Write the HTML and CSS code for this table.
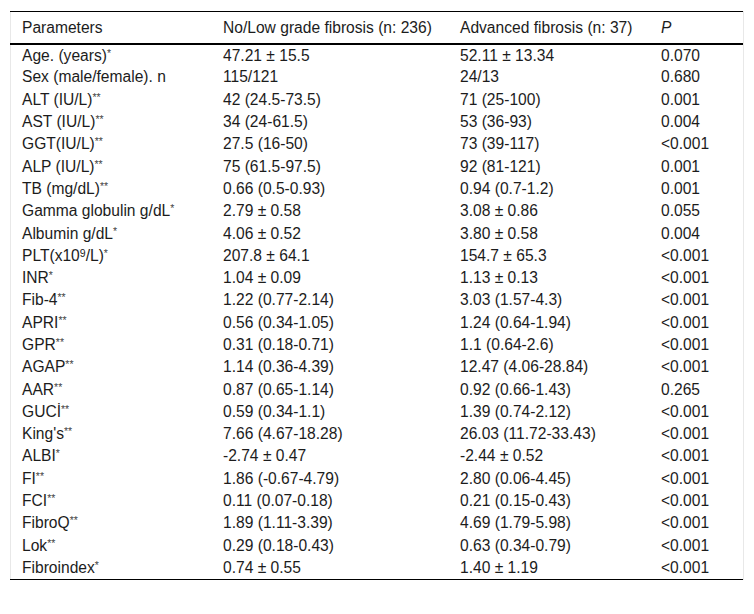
FILE: index.html
```html
<!DOCTYPE html>
<html lang="en">
<head>
<meta charset="utf-8">
<title>Table</title>
<link rel="stylesheet" href="styles.css">
</head>
<body>
<div class="frame">
<table class="data">
<thead>
<tr><th>Parameters</th><th>No/Low grade fibrosis (n: 236)</th><th>Advanced fibrosis (n: 37)</th><th><i>P</i></th></tr>
</thead>
<tbody>
<tr><td>Age. (years)<sup>*</sup></td><td>47.21 ± 15.5</td><td>52.11 ± 13.34</td><td>0.070</td></tr>
<tr><td>Sex (male/female). n</td><td>115/121</td><td>24/13</td><td>0.680</td></tr>
<tr><td>ALT (IU/L)<sup>**</sup></td><td>42 (24.5-73.5)</td><td>71 (25-100)</td><td>0.001</td></tr>
<tr><td>AST (IU/L)<sup>**</sup></td><td>34 (24-61.5)</td><td>53 (36-93)</td><td>0.004</td></tr>
<tr><td>GGT(IU/L)<sup>**</sup></td><td>27.5 (16-50)</td><td>73 (39-117)</td><td>&lt;0.001</td></tr>
<tr><td>ALP (IU/L)<sup>**</sup></td><td>75 (61.5-97.5)</td><td>92 (81-121)</td><td>0.001</td></tr>
<tr><td>TB (mg/dL)<sup>**</sup></td><td>0.66 (0.5-0.93)</td><td>0.94 (0.7-1.2)</td><td>0.001</td></tr>
<tr><td>Gamma globulin g/dL<sup>*</sup></td><td>2.79 ± 0.58</td><td>3.08 ± 0.86</td><td>0.055</td></tr>
<tr><td>Albumin g/dL<sup>*</sup></td><td>4.06 ± 0.52</td><td>3.80 ± 0.58</td><td>0.004</td></tr>
<tr><td>PLT(x10<sup class="exp">9</sup>/L)<sup>*</sup></td><td>207.8 ± 64.1</td><td>154.7 ± 65.3</td><td>&lt;0.001</td></tr>
<tr><td>INR<sup>*</sup></td><td>1.04 ± 0.09</td><td>1.13 ± 0.13</td><td>&lt;0.001</td></tr>
<tr><td>Fib-4<sup>**</sup></td><td>1.22 (0.77-2.14)</td><td>3.03 (1.57-4.3)</td><td>&lt;0.001</td></tr>
<tr><td>APRI<sup>**</sup></td><td>0.56 (0.34-1.05)</td><td>1.24 (0.64-1.94)</td><td>&lt;0.001</td></tr>
<tr><td>GPR<sup>**</sup></td><td>0.31 (0.18-0.71)</td><td>1.1 (0.64-2.6)</td><td>&lt;0.001</td></tr>
<tr><td>AGAP<sup>**</sup></td><td>1.14 (0.36-4.39)</td><td>12.47 (4.06-28.84)</td><td>&lt;0.001</td></tr>
<tr><td>AAR<sup>**</sup></td><td>0.87 (0.65-1.14)</td><td>0.92 (0.66-1.43)</td><td>0.265</td></tr>
<tr><td>GUCİ<sup>**</sup></td><td>0.59 (0.34-1.1)</td><td>1.39 (0.74-2.12)</td><td>&lt;0.001</td></tr>
<tr><td>King's<sup>**</sup></td><td>7.66 (4.67-18.28)</td><td>26.03 (11.72-33.43)</td><td>&lt;0.001</td></tr>
<tr><td>ALBI<sup>*</sup></td><td>-2.74 ± 0.47</td><td>-2.44 ± 0.52</td><td>&lt;0.001</td></tr>
<tr><td>FI<sup>**</sup></td><td>1.86 (-0.67-4.79)</td><td>2.80 (0.06-4.45)</td><td>&lt;0.001</td></tr>
<tr><td>FCI<sup>**</sup></td><td>0.11 (0.07-0.18)</td><td>0.21 (0.15-0.43)</td><td>&lt;0.001</td></tr>
<tr><td>FibroQ<sup>**</sup></td><td>1.89 (1.11-3.39)</td><td>4.69 (1.79-5.98)</td><td>&lt;0.001</td></tr>
<tr><td>Lok<sup>**</sup></td><td>0.29 (0.18-0.43)</td><td>0.63 (0.34-0.79)</td><td>&lt;0.001</td></tr>
<tr><td>Fibroindex<sup>*</sup></td><td>0.74 ± 0.55</td><td>1.40 ± 1.19</td><td>&lt;0.001</td></tr>
</tbody>
</table>
</div>
</body>
</html>
```
FILE: styles.css
```css
html {
  margin: 0;
  padding: 0;
  height: 614px;
  overflow: hidden;
  background: #ffffff;
}

body {
  margin: 0;
  padding: 11px 0 0 10px;
  height: 614px;
  box-sizing: border-box;
  overflow: hidden;
  font-family: "Liberation Sans", Arial, sans-serif;
  color: #1c1c1c;
  font-size: 15.6px;
}

.frame {
  width: 734px;
  border-left: 1px solid #e8e8e8;
  border-right: 1px solid #e8e8e8;
  box-sizing: border-box;
}

.data {
  width: 733px;
  margin-left: -1px;
  border-collapse: collapse;
  table-layout: fixed;
  border-top: 1px solid #000;
  border-bottom: 1px solid #000;
}

.data th, .data td {
  box-sizing: border-box;
}

.data th:nth-child(1) { width: 201px; }
.data th:nth-child(2) { width: 237px; }
.data th:nth-child(3) { width: 201px; }
.data th:nth-child(4) { width: 94px; }

.data th {
  font-weight: normal;
  text-align: left;
  padding: 7px 0 6px 12px;
  line-height: 18px;
  border-bottom: 2px solid #000;
  vertical-align: middle;
}

.data tbody tr {
  height: 22.3px;
}

.data td {
  padding: 0 0 0 12px;
  line-height: 18px;
  vertical-align: middle;
  white-space: nowrap;
}

.data sup {
  font-size: 10.5px;
  line-height: 0;
  vertical-align: 4px;
  color: #444;
}

.data sup.exp {
  font-size: 10.5px;
  color: inherit;
}
```
